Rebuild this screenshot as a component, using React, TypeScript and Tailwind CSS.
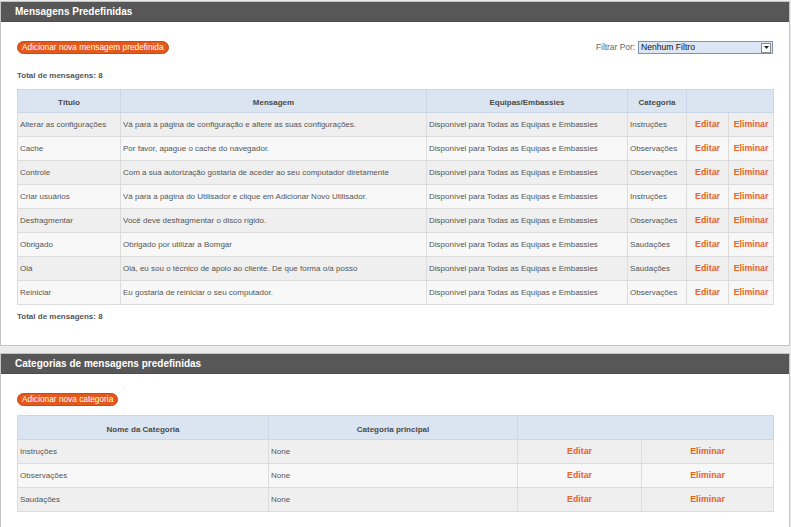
import React from "react";

type Msg = { titulo: string; mensagem: string; categoria: string };

const mensagens: Msg[] = [
  { titulo: "Alterar as configurações", mensagem: "Vá para a página de configuração e altere as suas configurações.", categoria: "Instruções" },
  { titulo: "Cache", mensagem: "Por favor, apague o cache do navegador.", categoria: "Observações" },
  { titulo: "Controle", mensagem: "Com a sua autorização gostaria de aceder ao seu computador diretamente", categoria: "Observações" },
  { titulo: "Criar usuários", mensagem: "Vá para a página do Utilisador e clique em Adicionar Novo Utilisador.", categoria: "Instruções" },
  { titulo: "Desfragmentar", mensagem: "Você deve desfragmentar o disco rígido.", categoria: "Observações" },
  { titulo: "Obrigado", mensagem: "Obrigado por utilizar a Bomgar", categoria: "Saudações" },
  { titulo: "Olá", mensagem: "Olá, eu sou o técnico de apoio ao cliente. De que forma o/a posso", categoria: "Saudações" },
  { titulo: "Reiniciar", mensagem: "Eu gostaria de reiniciar o seu computador.", categoria: "Observações" },
];

const categorias = ["Instruções", "Observações", "Saudações"];

const th = "h-[23px] pt-[4px] border border-[#c9d7e8] bg-[#dbe5f1] text-center font-bold text-[#4a4a4a] align-middle";
const td = "h-[24px] border border-[#dcdcdc] px-[2px] align-middle whitespace-nowrap overflow-hidden";
const act = "h-[24px] border border-[#dcdcdc] text-center align-middle font-bold text-[#e8622a] text-[8.8px]";

const PanelHeader = ({ title }: { title: string }) => (
  <div className="h-[20px] bg-[#575757] border-b border-[#4a4a4a] pl-[14px] flex items-center text-white font-bold text-[10px]">
    {title}
  </div>
);

const OrangeButton = ({ label }: { label: string }) => (
  <button className="h-[13px] px-[4px] rounded-full bg-[#e4581b] border border-[#c94a12] text-white text-[8.3px] leading-none flex items-center">
    {label}
  </button>
);

export default function App() {
  return (
    <div
      className="w-[791px] min-h-[527px] bg-[#ebebeb] pt-[1px] text-[8px] text-[#555]"
      style={{ fontFamily: '"Liberation Sans", Arial, sans-serif' }}
    >
      {/* Mensagens */}
      <div className="mr-[1px] bg-white border border-[#c4c4c4] h-[345px]">
        <PanelHeader title="Mensagens Predefinidas" />
        <div className="px-[16px]">
          <div className="mt-[19px] flex items-center justify-between">
            <OrangeButton label="Adicionar nova mensagem predefinida" />
            <div className="flex items-center gap-[3px]">
              <span className="text-[8.4px] text-[#666]">Filtrar Por:</span>
              <div className="w-[135px] h-[13px] border border-[#7f93ad] bg-[#dde6f5] flex items-center justify-between">
                <span className="pl-[2px] text-[8.6px] text-[#111]">Nenhum Filtro</span>
                <span className="w-[10px] h-[10px] mr-[1px] border border-[#8a8a8a] bg-white flex items-center justify-center">
                  <svg width="5" height="3" viewBox="0 0 5 3">
                    <path d="M0 0h5L2.5 3z" fill="#222" />
                  </svg>
                </span>
              </div>
            </div>
          </div>
          <div className="mt-[18px] font-bold leading-none">Total de mensagens: 8</div>
          <table className="mt-[9px] w-[756px] table-fixed border-collapse border border-[#c9d7e8]">
            <colgroup>
              <col className="w-[103px]" />
              <col className="w-[306px]" />
              <col className="w-[201px]" />
              <col className="w-[59px]" />
              <col className="w-[42px]" />
              <col className="w-[45px]" />
            </colgroup>
            <thead>
              <tr>
                <th className={th}>Título</th>
                <th className={th}>Mensagem</th>
                <th className={th}>Equipas/Embassies</th>
                <th className={th}>Categoria</th>
                <th className={th} colSpan={2}></th>
              </tr>
            </thead>
            <tbody>
              {mensagens.map((m, i) => (
                <tr key={m.titulo} className={i % 2 === 0 ? "bg-[#efefef]" : "bg-[#f8f8f8]"}>
                  <td className={td}>{m.titulo}</td>
                  <td className={td}>{m.mensagem}</td>
                  <td className={td}>Disponível para Todas as Equipas e Embassies</td>
                  <td className={td}>{m.categoria}</td>
                  <td className={act}>Editar</td>
                  <td className={act}>Eliminar</td>
                </tr>
              ))}
            </tbody>
          </table>
          <div className="mt-[8px] font-bold leading-none">Total de mensagens: 8</div>
        </div>
      </div>

      {/* Categorias */}
      <div className="mt-[7px] mr-[1px] bg-white border border-[#c4c4c4] h-[180px]">
        <PanelHeader title="Categorias de mensagens predefinidas" />
        <div className="px-[16px]">
          <div className="mt-[19px] flex">
            <OrangeButton label="Adicionar nova categoria" />
          </div>
          <table className="mt-[9px] w-[756px] table-fixed border-collapse border border-[#c9d7e8]">
            <colgroup>
              <col className="w-[251px]" />
              <col className="w-[249px]" />
              <col className="w-[124px]" />
              <col className="w-[132px]" />
            </colgroup>
            <thead>
              <tr>
                <th className={th + " h-[24px]"}>Nome da Categoria</th>
                <th className={th + " h-[24px]"}>Categoria principal</th>
                <th className={th + " h-[24px]"} colSpan={2}></th>
              </tr>
            </thead>
            <tbody>
              {categorias.map((c, i) => (
                <tr key={c} className={i % 2 === 0 ? "bg-[#efefef]" : "bg-[#f8f8f8]"}>
                  <td className={td}>{c}</td>
                  <td className={td}>None</td>
                  <td className={act}>Editar</td>
                  <td className={act}>Eliminar</td>
                </tr>
              ))}
            </tbody>
          </table>
        </div>
      </div>
    </div>
  );
}
